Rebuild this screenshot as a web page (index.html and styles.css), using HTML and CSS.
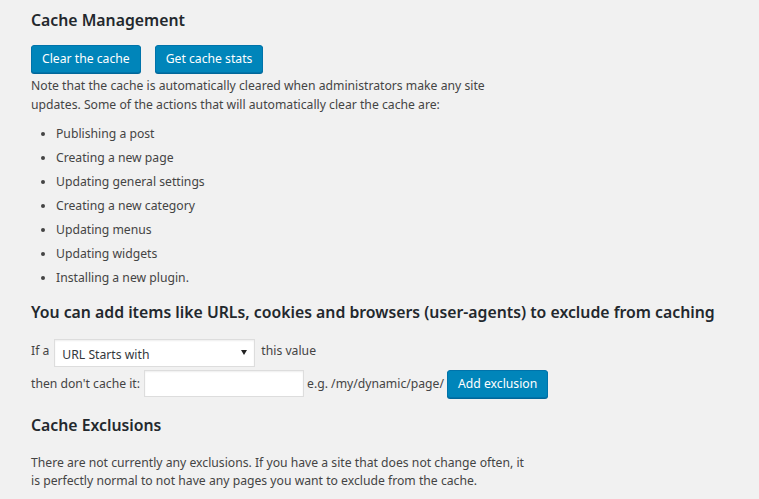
FILE: index.html
```html
<!DOCTYPE html>
<html>
<head>
<meta charset="utf-8">
<link rel="stylesheet" href="styles.css">
</head>
<body>
<div class="wrap">
  <h2 class="title first">Cache Management</h2>
  <div class="actions">
    <button class="btn">Clear the cache</button>
    <button class="btn">Get cache stats</button>
  </div>
  <p class="note">Note that the cache is automatically cleared when administrators make any site<br>updates. Some of the actions that will automatically clear the cache are:</p>
  <ul class="list">
    <li>Publishing a post</li>
    <li>Creating a new page</li>
    <li>Updating general settings</li>
    <li>Creating a new category</li>
    <li>Updating menus</li>
    <li>Updating widgets</li>
    <li>Installing a new plugin.</li>
  </ul>
  <h2 class="title exclude">You can add items like URLs, cookies and browsers (user-agents) to exclude from caching</h2>
  <div class="row row1">
    <span class="lbl-if">If a</span>
    <span class="select-wrap"><select class="select"><option>URL Starts with</option></select></span>
    <span class="lbl-val">this value</span>
  </div>
  <div class="row row2">
    <span>then don't cache it:</span>
    <input class="text" type="text">
    <span>e.g. /my/dynamic/page/</span>
    <button class="btn">Add exclusion</button>
  </div>
  <h2 class="title excl">Cache Exclusions</h2>
  <p class="note last">There are not currently any exclusions. If you have a site that does not change often, it<br>is perfectly normal to not have any pages you want to exclude from the cache.</p>
</div>
</body>
</html>
```
FILE: styles.css
```css
html, body {
  margin: 0;
  padding: 0;
  background: #f1f1f1;
}
body {
  font-family: "Noto Sans", "Open Sans", sans-serif;
  font-size: 12.2px;
  color: #444;
}
.wrap {
  padding: 0 0 0 31px;
}
.title {
  font-size: 15.8px;
  font-weight: 600;
  color: #23282d;
  margin: 0;
  line-height: 24px;
  white-space: nowrap;
}
.first {
  padding-top: 8px;
}
.actions {
  display: flex;
  gap: 14px;
  margin-top: 13px;
}
.btn {
  font-family: inherit;
  font-size: 12.2px;
  height: 28px;
  line-height: 26px;
  padding: 0 10px 1px;
  border: 1px solid #0073aa;
  border-radius: 3px;
  background: #0085ba;
  color: #fff;
  box-shadow: 0 1px 0 #006799;
  cursor: pointer;
}
.note {
  margin: 3px 0 0;
  line-height: 19px;
}
.list {
  list-style: disc;
  margin: 11px 0 0;
  padding-left: 25px;
}
.list li {
  line-height: 18px;
  margin-bottom: 6px;
}
.exclude {
  margin-top: 13px;
}
.row {
  display: flex;
  align-items: center;
}
.row1 {
  margin-top: 15px;
  height: 28px;
  align-items: flex-start;
}
.lbl-if {
  margin-right: 5px;
  margin-top: 3px;
}
.lbl-val {
  margin-left: 6px;
  margin-top: 3px;
}
.select-wrap {
  position: relative;
  display: inline-block;
}
.select-wrap::after {
  content: "";
  position: absolute;
  right: 8px;
  top: 11px;
  border-left: 3px solid transparent;
  border-right: 3px solid transparent;
  border-top: 5px solid #222;
  pointer-events: none;
}
.select {
  appearance: none;
  -webkit-appearance: none;
  width: 201px;
  height: 28px;
  border: 1px solid #ddd;
  background: #fff;
  box-shadow: inset 0 1px 2px rgba(0,0,0,.07);
  font-family: inherit;
  font-size: 12.2px;
  color: #32373c;
  padding: 2px 7px 0;
  border-radius: 0;
}
.row2 {
  margin-top: 2px;
  height: 29px;
}
.text {
  width: 160px;
  height: 27px;
  box-sizing: border-box;
  border: 1px solid #ddd;
  background: #fff;
  box-shadow: inset 0 1px 2px rgba(0,0,0,.07);
  margin: 0 3px 0 4px;
  padding: 0;
}
.row2 .btn {
  margin-left: 3px;
}
.excl {
  margin-top: 15px;
}
.last {
  margin-top: 17px;
  line-height: 18px;
}
```
